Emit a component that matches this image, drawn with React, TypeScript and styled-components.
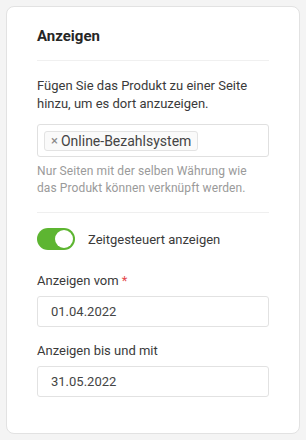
import React from "react";
import styled, { createGlobalStyle } from "styled-components";

const Global = createGlobalStyle`
  html, body { margin: 0; padding: 0; background: #f4f4f4; }
  body { font-family: Roboto, "Noto Sans", Arial, sans-serif; color: #333; }
  * { box-sizing: border-box; }
`;

const Page = styled.div`
  padding: 6px;
`;

const Card = styled.section`
  width: 294px;
  height: 428px;
  background: #fff;
  border: 1px solid #e2e2e2;
  border-radius: 8px;
  padding: 0 30px;
  display: flex;
  flex-direction: column;
`;

const Header = styled.div`
  padding: 19px 0 14px;
  border-bottom: 1px solid #f0f0f0;
`;

const Title = styled.h2`
  margin: 0;
  font-size: 15px;
  line-height: 20px;
  font-weight: 700;
  color: #262626;
`;

const Description = styled.p`
  margin: 16px 0 0;
  font-size: 13px;
  line-height: 18px;
  color: #3a3a3a;
`;

const SelectBox = styled.div`
  margin-top: 11px;
  height: 33px;
  border: 1px solid #e0e0e0;
  border-radius: 3px;
  padding: 0 6px;
  display: flex;
  align-items: center;
`;

const Tag = styled.span`
  display: inline-flex;
  align-items: center;
  gap: 3px;
  height: 20px;
  padding: 0 6px 0 6px;
  border: 1px solid #e3e3e3;
  border-radius: 3px;
  background: #fafafa;
  font-size: 14px;
  color: #444;
`;

const TagClose = styled.span`
  font-size: 13px;
  color: #888;
  line-height: 1;
`;

const Help = styled.p`
  margin: 6px 0 0;
  max-width: 220px;
  font-size: 12px;
  line-height: 17px;
  letter-spacing: 0.1px;
  color: #9a9a9a;
`;

const Divider = styled.hr`
  margin: 15px 0 0;
  border: 0;
  border-top: 1px solid #efefef;
`;

const SwitchRow = styled.label`
  margin-top: 15px;
  display: flex;
  align-items: center;
  gap: 13px;
  font-size: 13px;
  color: #3a3a3a;
`;

const Track = styled.span<{ $on: boolean }>`
  position: relative;
  width: 38px;
  height: 22px;
  border-radius: 11px;
  background: ${(p) => (p.$on ? "#5db531" : "#ccc")};
  flex: none;
`;

const Knob = styled.span<{ $on: boolean }>`
  position: absolute;
  top: 2px;
  left: ${(p) => (p.$on ? "18px" : "2px")};
  width: 18px;
  height: 18px;
  border-radius: 50%;
  background: #fff;
`;

const FieldLabel = styled.div<{ $first?: boolean }>`
  margin-top: ${(p) => (p.$first ? "22px" : "15px")};
  font-size: 13px;
  line-height: 18px;
  color: #3a3a3a;
`;

const Required = styled.span`
  color: #e5484d;
  margin-left: 3px;
`;

const DateInput = styled.div`
  margin-top: 6px;
  height: 31px;
  border: 1px solid #e2e2e2;
  border-radius: 3px;
  padding: 0 13px;
  display: flex;
  align-items: center;
  font-size: 13px;
  color: #444;
`;

export default function App() {
  return (
    <Page>
      <Global />
      <Card>
        <Header>
          <Title>Anzeigen</Title>
        </Header>
        <Description>
          Fügen Sie das Produkt zu einer Seite hinzu, um es dort anzuzeigen.
        </Description>
        <SelectBox>
          <Tag>
            <TagClose>×</TagClose>Online-Bezahlsystem
          </Tag>
        </SelectBox>
        <Help>
          Nur Seiten mit der selben Währung wie das Produkt können verknüpft
          werden.
        </Help>
        <Divider />
        <SwitchRow>
          <Track $on>
            <Knob $on />
          </Track>
          Zeitgesteuert anzeigen
        </SwitchRow>
        <FieldLabel $first>
          Anzeigen vom<Required>*</Required>
        </FieldLabel>
        <DateInput>01.04.2022</DateInput>
        <FieldLabel>Anzeigen bis und mit</FieldLabel>
        <DateInput>31.05.2022</DateInput>
      </Card>
    </Page>
  );
}
